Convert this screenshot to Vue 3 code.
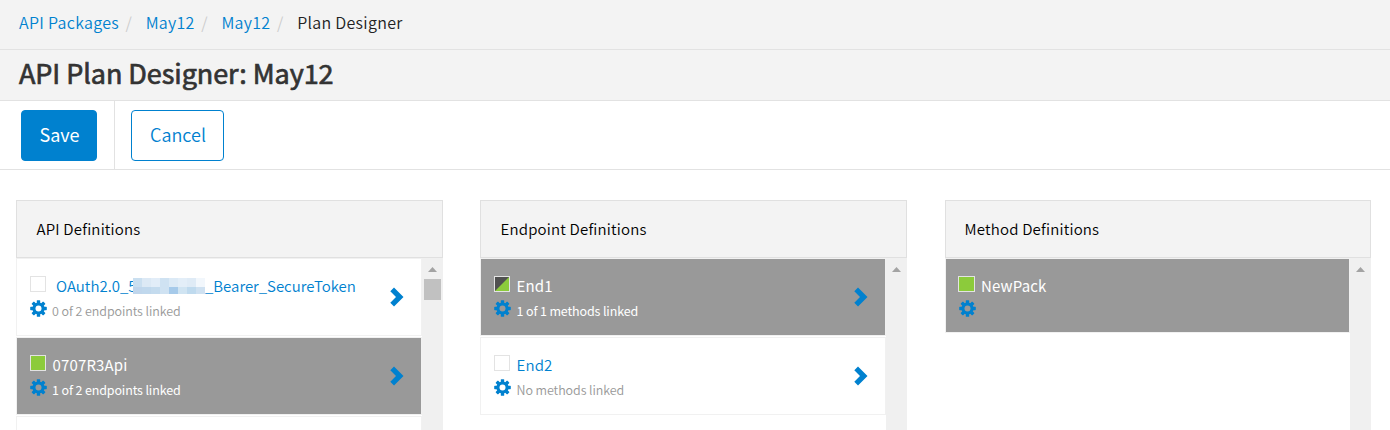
<script setup>
const crumbs = ['API Packages', 'May12', 'May12']

const panels = [
  {
    title: 'API Definitions',
    kind: 'apis',
    thumb: true,
    items: [
      { name: 'OAuth2.0_5', tail: '_Bearer_SecureToken', masked: true, note: '0 of 2 endpoints linked', state: 'none', arrow: true },
      { name: '0707R3Api', note: '1 of 2 endpoints linked', state: 'full', selected: true, arrow: true },
      { name: '', note: '', state: 'none' },
    ],
  },
  {
    title: 'Endpoint Definitions',
    kind: 'endpoints',
    items: [
      { name: 'End1', note: '1 of 1 methods linked', state: 'half', selected: true, arrow: true },
      { name: 'End2', note: 'No methods linked', state: 'none', arrow: true },
    ],
  },
  {
    title: 'Method Definitions',
    kind: 'methods',
    items: [{ name: 'NewPack', note: '', state: 'full', selected: true }],
  },
]

const mosaic = [
  '#cadff0', '#dce9f5', '#e2edf8', '#cfe2f2', '#dceaf6', '#e3eef8', '#dfebf6', '#f2f7fc',
  '#c0d6ec', '#c0d8ed', '#c4dbee', '#cfe2f2', '#a6caea', '#d0e4f2', '#bfdaee', '#cfe1f1',
]
</script>

<template>
  <div class="page">
    <nav class="crumbs">
      <template v-for="(c, i) in crumbs" :key="i">
        <a>{{ c }}</a><span class="slash">/</span>
      </template>
      <span class="here">Plan Designer</span>
    </nav>
    <header class="heading"><h1>API Plan Designer: May12</h1></header>
    <div class="toolbar">
      <div class="primary"><button class="btn save">Save</button></div>
      <button class="btn cancel">Cancel</button>
    </div>
    <main class="panels">
      <section v-for="p in panels" :key="p.kind" class="panel" :class="p.kind">
        <h2>{{ p.title }}</h2>
        <div class="body">
          <div class="list">
            <article v-for="(it, i) in p.items" :key="i" class="item" :class="{ selected: it.selected }">
              <div class="marks">
                <span class="box" :class="it.state"></span>
                <svg class="gear" viewBox="0 0 17 17">
                  <g fill="#0081cf">
                    <rect v-for="a in [0, 45, 90, 135]" :key="a" x="6.8" y="0.2" width="3.4" height="16.6" rx=".6" :transform="`rotate(${a} 8.5 8.5)`" />
                    <circle cx="8.5" cy="8.5" r="6.1" />
                  </g>
                  <circle class="hole" cx="8.5" cy="8.5" r="3" />
                </svg>
              </div>
              <div class="texts">
                <div class="name" :class="{ indented: it.masked }">
                  <span>{{ it.name }}</span>
                  <span v-if="it.masked" class="mosaic"><i v-for="(c, k) in mosaic" :key="k" :style="{ background: c }"></i></span>
                  <span v-if="it.tail" class="tail">{{ it.tail }}</span>
                </div>
                <div class="note">{{ it.note }}</div>
              </div>
              <svg v-if="it.arrow" class="arrow" viewBox="0 0 14 20">
                <path d="M0.3 4.2 4 0.5 13.5 10 4 19.5 0.3 15.8 6 10Z" fill="#0081cf" />
              </svg>
            </article>
          </div>
          <div class="track">
            <svg class="up" viewBox="0 0 9 5"><path d="M4.5 0 9 5H0Z" fill="#a3a3a3" /></svg>
            <div v-if="p.thumb" class="thumb"></div>
          </div>
        </div>
      </section>
    </main>
  </div>
</template>

<style>
body { overflow: hidden; background: #fff; }
</style>

<style scoped>
* { box-sizing: border-box; }
.page { width: 1390px; height: 430px; overflow: hidden; display: flex; flex-direction: column; font-family: "Noto Sans CJK SC", "Noto Sans", sans-serif; font-weight: 350; color: #333; }
.crumbs { height: 50px; flex: none; display: flex; align-items: center; padding: 0 0 6px 19px; background: #f3f3f3; border-bottom: 1px solid #e2e2e2; font-size: 16px; letter-spacing: .3px; line-height: 24px; white-space: nowrap; }
.crumbs a { color: #0081cf; }
.slash { color: #ccc; width: 26.7px; padding-left: 6.5px; }
.here { color: #222; }
.heading { height: 51px; flex: none; display: flex; align-items: center; padding: 0 0 4px 19px; background: #f3f3f3; border-bottom: 1px solid #e2e2e2; }
h1 { margin: 0; font-size: 27px; letter-spacing: -.07px; font-weight: 400; line-height: 36px; white-space: nowrap; -webkit-text-stroke: .7px #333; }
.toolbar { height: 69px; flex: none; display: flex; align-items: center; border-bottom: 1px solid #e2e2e2; }
.primary { width: 115px; height: 100%; padding: 9px 0 0 21px; border-right: 1px solid #e2e2e2; }
.btn { height: 51px; padding: 0 0 2px 1px; border: 1px solid #0081cf; border-radius: 4px; font: 350 18px/47px "Noto Sans CJK SC", sans-serif; display: block; }
.save { width: 76px; background: #0081cf; color: #fff; font-weight: 400; }
.cancel { width: 93px; margin-left: 16px; background: #fff; color: #0081cf; }
.panels { height: 260px; flex: none; padding: 30px 0 0 16px; display: flex; }
.panel { width: 427px; display: flex; flex-direction: column; margin-right: 37px; }
.endpoints { margin-right: 38px; }
.methods { width: 426px; margin-right: 0; }
h2 { margin: 0; height: 58px; flex: none; padding: 0 0 0 19.5px; background: #f3f3f3; border: 1px solid #e0e0e0; font-size: 15px; letter-spacing: .19px; line-height: 55px; font-weight: 350; color: #000; }
.methods h2 { padding-left: 18.5px; }
.body { flex: 1; min-height: 0; display: flex; }
.list { flex: 1; overflow: hidden; display: flex; flex-direction: column; gap: 1px; }
.item { height: 78px; flex: none; display: flex; border: 1px solid #f1f1f1; padding: 17px 17px 0 13px; background: #fff; color: #0081cf; }
.item.selected { background: #999; color: #fff; font-weight: 400; }
.methods .item { height: 75px; padding-left: 12px; }
.marks { width: 22px; display: flex; flex-direction: column; }
.methods .marks { width: 22.5px; }
.box { width: 16px; height: 16px; border: 1px solid #e3e3e3; background: #fff; }
.box.full { background: #8ccb3b; }
.box.half { background: linear-gradient(135deg, #505050 49%, #8ccb3b 51%); }
.methods .box { width: 17px; }
.gear { width: 17px; height: 17px; margin: 8px 0 0 .3px; }
.methods .gear { margin-left: .8px; }
.hole { fill: #fff; }
.selected .hole { fill: #999; }
.texts { flex: 1; white-space: nowrap; }
.name { height: 22px; display: flex; font-size: 15px; line-height: 19px; padding-left: .5px; letter-spacing: .15px; }
.name.indented { padding-left: 4px; letter-spacing: 0; }
.mosaic { width: 72px; height: 16px; margin: 2px 0 0 -3.5px; display: grid; grid-template-columns: repeat(8, 9px); grid-template-rows: 9px 7px; position: relative; }
.tail { letter-spacing: -.03px; }
.note { font-size: 12.5px; letter-spacing: -.08px; line-height: 25px; color: #999; }
.endpoints .note { padding-left: .5px; }
.selected .note { color: #fff; letter-spacing: -.14px; }
.arrow { width: 14px; height: 20px; margin-top: 11px; }
.track { width: 21px; background: #f0f0f0; display: flex; flex-direction: column; align-items: center; padding-top: 9px; }
.up { width: 9px; height: 5px; }
.thumb { width: 17px; height: 21px; margin-top: 7px; background: #c1c1c1; }
</style>
